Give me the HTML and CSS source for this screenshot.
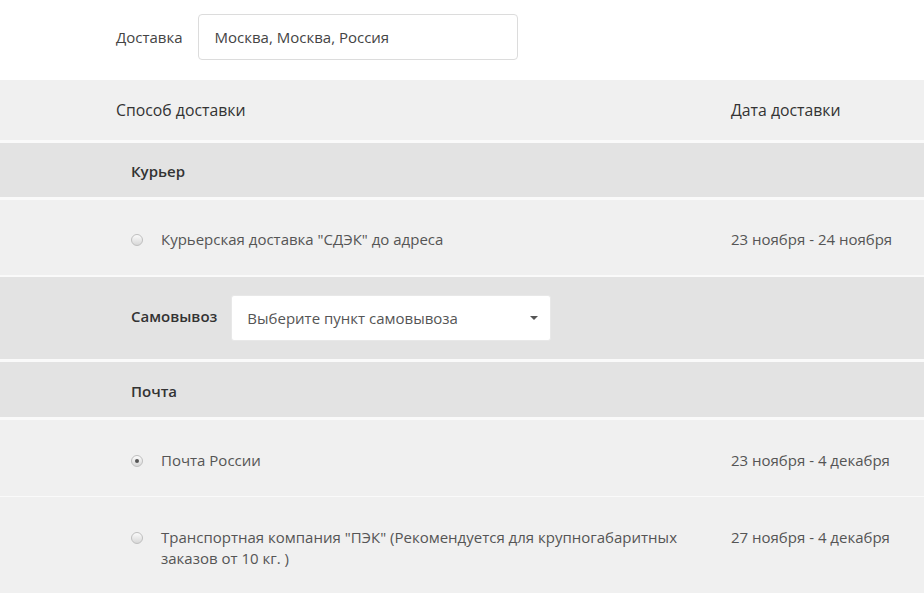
FILE: index.html
```html
<!DOCTYPE html>
<html lang="ru">
<head>
<meta charset="utf-8">
<title>Доставка</title>
<link rel="stylesheet" href="styles.css">
</head>
<body>
<div class="top">
  <span class="top-label">Доставка</span>
  <div class="city-input">Москва, Москва, Россия</div>
</div>
<div class="table">
  <div class="row head">
    <div class="c-method">Способ доставки</div>
    <div class="c-date">Дата доставки</div>
  </div>
  <div class="group courier"><span class="group-title">Курьер</span></div>
  <div class="row option">
    <div class="c-method opt"><span class="radio"></span><span class="opt-text">Курьерская доставка "СДЭК" до адреса</span></div>
    <div class="c-date">23 ноября - 24 ноября</div>
  </div>
  <div class="group pickup">
    <span class="group-title">Самовывоз</span>
    <div class="select"><span>Выберите пункт самовывоза</span><span class="caret"></span></div>
  </div>
  <div class="group post"><span class="group-title">Почта</span></div>
  <div class="row option thin">
    <div class="c-method opt"><span class="radio checked"></span><span class="opt-text">Почта России</span></div>
    <div class="c-date">23 ноября - 4 декабря</div>
  </div>
  <div class="row option last">
    <div class="c-method opt"><span class="radio"></span><span class="opt-text">Транспортная компания "ПЭК" (Рекомендуется для крупногабаритных заказов от 10 кг. )</span></div>
    <div class="c-date">27 ноября - 4 декабря</div>
  </div>
</div>
</body>
</html>
```
FILE: styles.css
```css
html, body {
  margin: 0;
  padding: 0;
  background: #fff;
}
body {
  font-family: "Open Sans", "Noto Sans", sans-serif;
  font-size: 15px;
  color: #555;
  width: 924px;
  height: 593px;
  overflow: hidden;
}
.top {
  height: 80px;
  display: flex;
  align-items: center;
  padding-left: 116px;
  gap: 15px;
}
.top-label {
  color: #444;
  margin-top: -6px;
}
.city-input {
  box-sizing: border-box;
  width: 320px;
  height: 46px;
  border: 1px solid #dcdcdc;
  border-radius: 4px;
  display: flex;
  align-items: center;
  padding-left: 16px;
  color: #444;
  margin-top: -6px;
}
.table {
  background: #f0f0f0;
}
.row {
  display: grid;
  grid-template-columns: 615px 1fr;
  align-items: center;
  padding-left: 116px;
}
.head {
  height: 60px;
  color: #333;
  font-size: 15.8px;
  border-bottom: 3px solid #fafafa;
}
.group {
  background: #e3e3e3;
  display: flex;
  align-items: center;
  padding-left: 131px;
  border-bottom: 3px solid #fafafa;
}
.courier {
  height: 54px;
}
.courier .group-title {
  padding-top: 2px;
}
.post {
  height: 55px;
}
.post .group-title {
  padding-top: 3px;
}
.group-title {
  font-weight: 600;
  color: #333;
}
.pickup {
  height: 82px;
  gap: 14px;
}
.pickup .group-title {
  margin-top: -4px;
}
.select {
  box-sizing: border-box;
  width: 320px;
  height: 46px;
  background: #fff;
  border-radius: 3px;
  border: 1px solid #e8e8e8;
  display: flex;
  align-items: center;
  justify-content: space-between;
  padding: 0 12px 0 15px;
  color: #555;
}
.caret {
  width: 0;
  height: 0;
  border-left: 4px solid transparent;
  border-right: 4px solid transparent;
  border-top: 4px solid #555;
}
.option {
  box-sizing: border-box;
  height: 77px;
  padding-top: 4px;
  border-bottom: 2px solid #fafafa;
}
.option.thin {
  height: 77px;
  padding-top: 4px;
  border-bottom: 1px solid #fafafa;
}
.option.last {
  height: 96px;
  border-bottom: 0;
  align-items: start;
  padding-top: 30px;
}
.opt {
  display: flex;
  align-items: flex-start;
  padding-left: 15px;
  gap: 18px;
}
.opt-text {
  color: #555;
  line-height: 21px;
  max-width: 540px;
}
.c-date {
  line-height: 21px;
}
.radio {
  box-sizing: border-box;
  flex: none;
  width: 12px;
  height: 12px;
  margin-top: 5px;
  border-radius: 50%;
  border: 1px solid #bfbfbf;
  background: linear-gradient(#fbfbfb, #d8d8d8);
  display: flex;
  align-items: center;
  justify-content: center;
}
.radio.checked::after {
  content: "";
  width: 4px;
  height: 4px;
  border-radius: 50%;
  background: #555;
}
.head .c-date, .head .c-method {
  color: #333;
}
```
